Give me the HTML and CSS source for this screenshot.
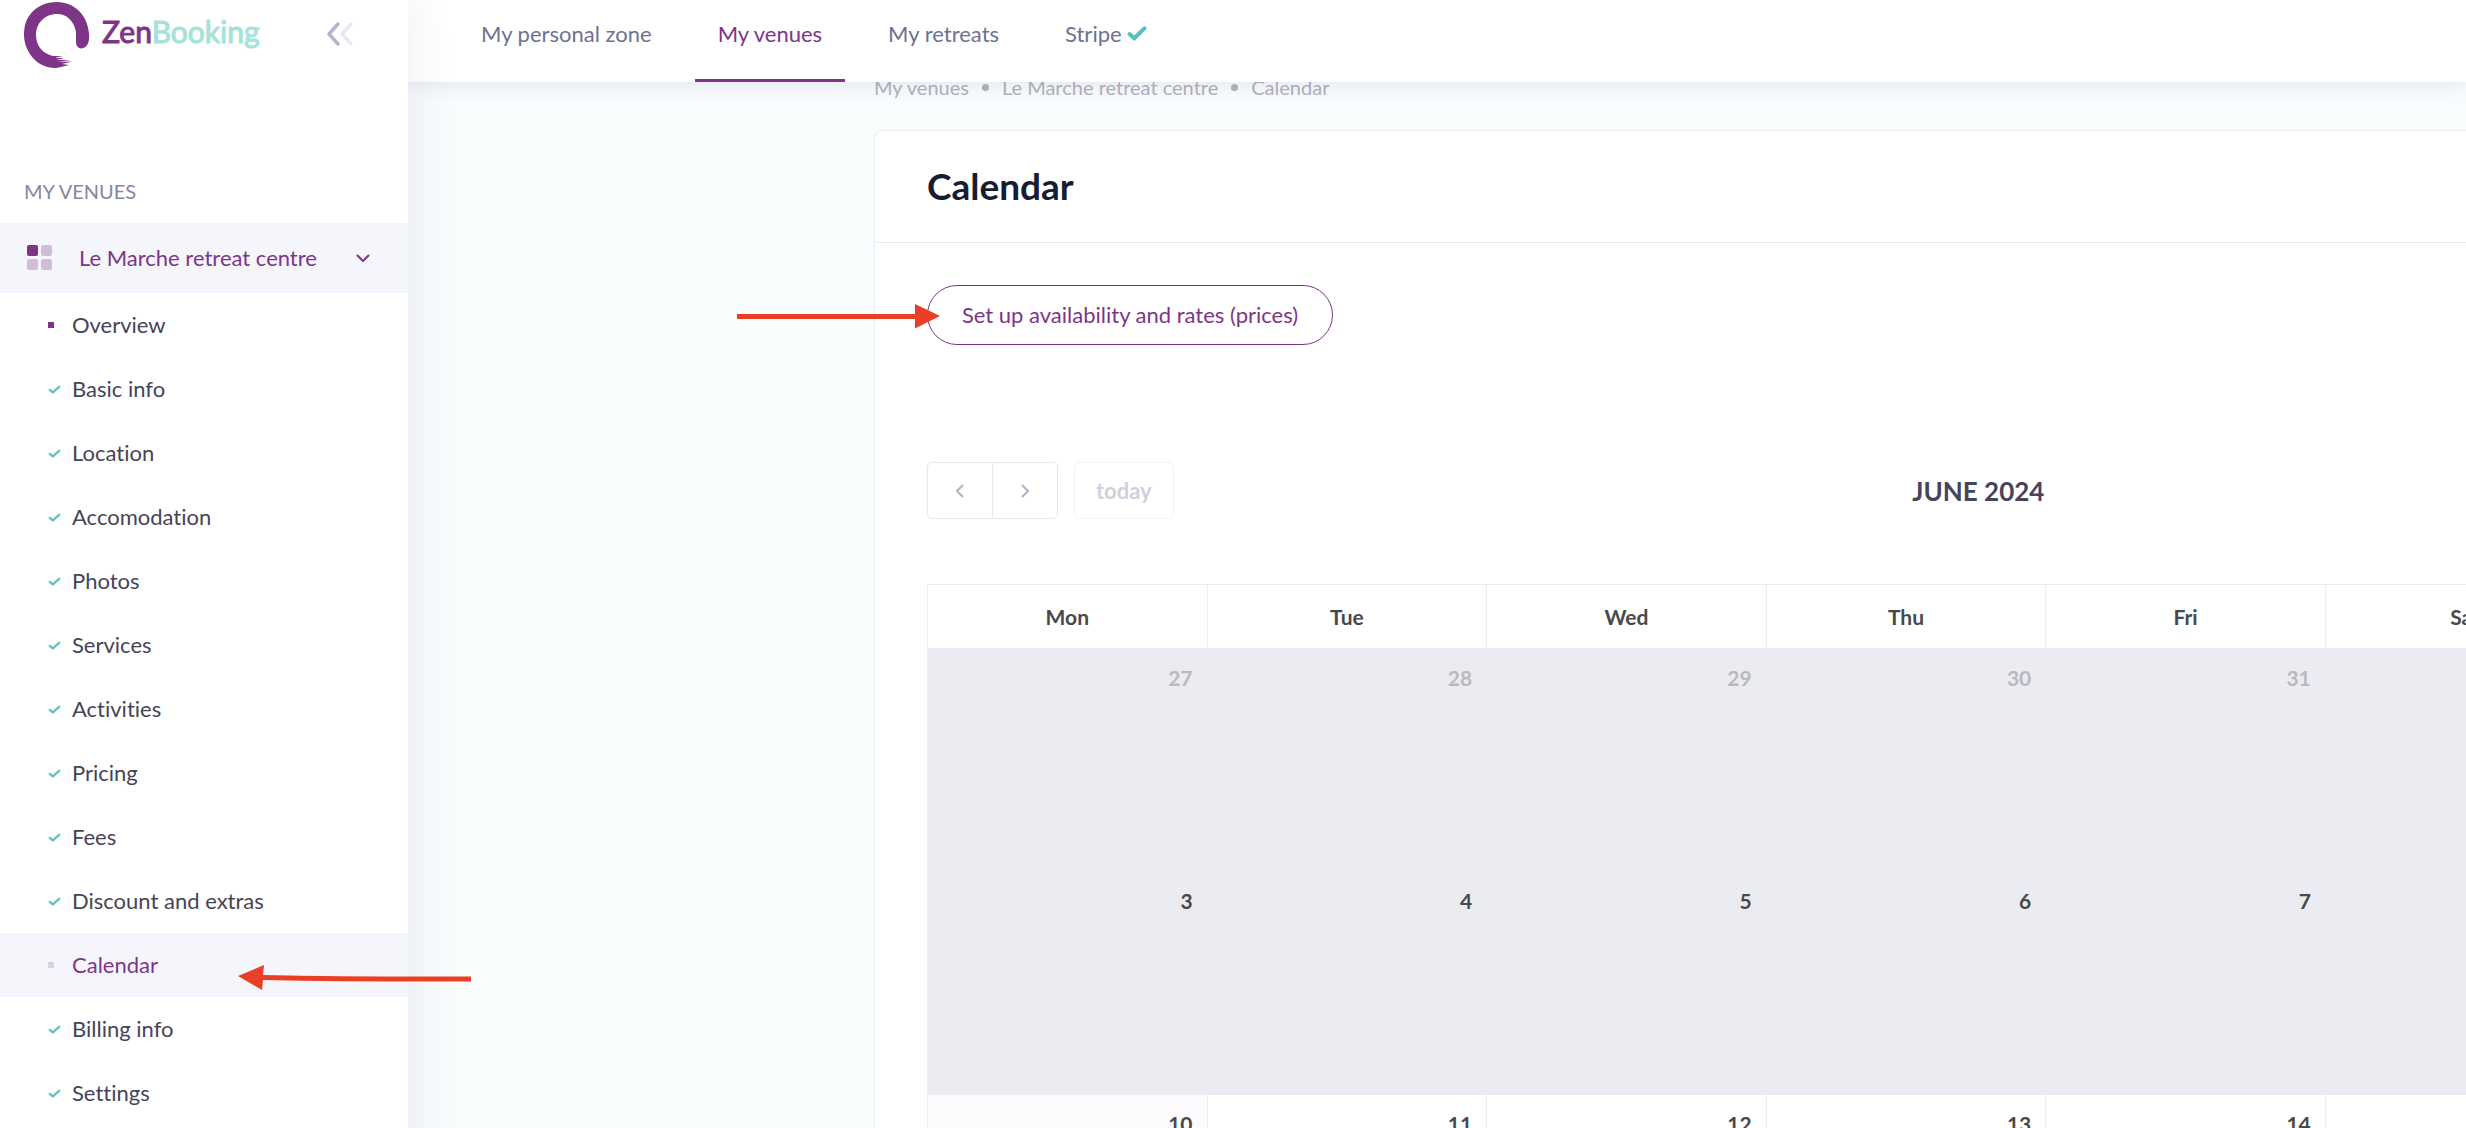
FILE: index.html
```html
<!DOCTYPE html>
<html lang="en">
<head>
<meta charset="utf-8">
<title>Calendar - ZenBooking</title>
<link rel="stylesheet" href="styles.css">
</head>
<body>
<svg class="sprite" width="0" height="0" aria-hidden="true">
  <symbol id="tick" viewBox="0 0 13 9"><path d="M1 4.300 4.800 7.300 12 1.200" fill="none" stroke="currentColor" stroke-width="2.300"/></symbol>
</svg>
<div class="app">
  <aside class="sidebar">
    <div class="brand">
      <a class="logo" href="#">
        <svg width="68" height="70" viewBox="0 0 68 70" aria-hidden="true">
          <path d="M0 35C0 27 2 20 5 16C12 6 22 2 33 2C51 2 64 16 65 34V39C64 51 52 51 52 42V32C50 21 43 14 33 14C21 14 12 23 12 35C12 47 20 54 29 56L39 56L31 57.500L40 58.500L32 60L46 60L34 62L48 61.500L38 64L45 65L37 67C28 70 16 66 9 58C4 52 0 44 0 35Z" fill="#7e3588"/>
        </svg>
        <span class="logo-name">Zen<span class="logo-accent">Booking</span></span>
      </a>
      <button class="collapse" type="button" aria-label="Collapse menu">
        <svg width="28" height="26" viewBox="0 0 28 26" fill="none" stroke-width="3.500" stroke-linecap="round" stroke-linejoin="round"><path d="M12 3 3 13 12 23" stroke="#b3b5cf"/><path d="M25 3 16 13 25 23" stroke="#e8e8f1"/></svg>
      </button>
    </div>
    <h2 class="section-title">MY VENUES</h2>
    <nav class="menu">
      <a class="venue" href="#">
        <svg width="26" height="26" viewBox="0 0 26 26" fill="#d2bdd9"><rect width="11" height="11" rx="2" fill="#7e3588"/><rect x="14" width="11" height="11" rx="2"/><rect y="14" width="11" height="11" rx="2"/><rect x="14" y="14" width="11" height="11" rx="2"/></svg>
        <span class="venue-name">Le Marche retreat centre</span>
        <svg width="14" height="9" viewBox="0 0 14 9" fill="none" stroke="#7e3588" stroke-width="2" stroke-linecap="round" stroke-linejoin="round"><path d="M1.500 1.500 7 7 12.500 1.500"/></svg>
      </a>
      <a class="item" href="#"><span class="mark"><i class="dot"></i></span>Overview</a>
      <a class="item" href="#"><span class="mark"><svg class="tick"><use href="#tick"/></svg></span>Basic info</a>
      <a class="item" href="#"><span class="mark"><svg class="tick"><use href="#tick"/></svg></span>Location</a>
      <a class="item" href="#"><span class="mark"><svg class="tick"><use href="#tick"/></svg></span>Accomodation</a>
      <a class="item" href="#"><span class="mark"><svg class="tick"><use href="#tick"/></svg></span>Photos</a>
      <a class="item" href="#"><span class="mark"><svg class="tick"><use href="#tick"/></svg></span>Services</a>
      <a class="item" href="#"><span class="mark"><svg class="tick"><use href="#tick"/></svg></span>Activities</a>
      <a class="item" href="#"><span class="mark"><svg class="tick"><use href="#tick"/></svg></span>Pricing</a>
      <a class="item" href="#"><span class="mark"><svg class="tick"><use href="#tick"/></svg></span>Fees</a>
      <a class="item" href="#"><span class="mark"><svg class="tick"><use href="#tick"/></svg></span>Discount and extras</a>
      <a class="item current" href="#"><span class="mark"><i class="dot"></i></span>Calendar</a>
      <a class="item" href="#"><span class="mark"><svg class="tick"><use href="#tick"/></svg></span>Billing info</a>
      <a class="item" href="#"><span class="mark"><svg class="tick"><use href="#tick"/></svg></span>Settings</a>
    </nav>
  </aside>

  <div class="main">
    <header class="topbar">
      <a class="tab" href="#">My personal zone</a>
      <a class="tab active" href="#">My venues</a>
      <a class="tab" href="#">My retreats</a>
      <a class="tab" href="#">Stripe<svg class="tab-check" width="20" height="15" viewBox="0 0 20 15" aria-hidden="true"><path d="M2.500 8 7.300 12.300 17.500 2.300" fill="none" stroke="#55c2bb" stroke-width="4" stroke-linecap="round"/></svg></a>
    </header>

    <main class="content">
      <nav class="crumbs" aria-label="Breadcrumb">
        <a href="#">My venues</a><i class="sep"></i><a href="#">Le Marche retreat centre</a><i class="sep"></i><a href="#">Calendar</a>
      </nav>
      <section class="card">
        <div class="card-head"><h1>Calendar</h1></div>
        <div class="card-body">
          <button class="setup" type="button">Set up availability and rates (prices)</button>
          <div class="toolbar">
            <div class="tools">
              <div class="pager">
                <button type="button" aria-label="Previous month"><svg width="8" height="14" viewBox="0 0 8 14"><path d="M7 1 1 7 7 13"/></svg></button>
                <button type="button" aria-label="Next month"><svg width="8" height="14" viewBox="0 0 8 14"><path d="M1 1 7 7 1 13"/></svg></button>
              </div>
              <button class="today" type="button" disabled>today</button>
            </div>
            <h2 class="month">JUNE 2024</h2>
          </div>
          <table class="calendar">
            <thead><tr><th>Mon</th><th>Tue</th><th>Wed</th><th>Thu</th><th>Fri</th><th>Sat</th><th>Sun</th></tr></thead>
            <tbody>
              <tr class="past other"><td>27</td><td>28</td><td>29</td><td>30</td><td>31</td><td class="june">1</td><td class="june">2</td></tr>
              <tr class="past"><td>3</td><td>4</td><td>5</td><td>6</td><td>7</td><td>8</td><td>9</td></tr>
              <tr><td class="now">10</td><td>11</td><td>12</td><td>13</td><td>14</td><td>15</td><td>16</td></tr>
            </tbody>
          </table>
        </div>
      </section>
    </main>
  </div>

  <svg class="arrow arrow-setup" width="204" height="26" viewBox="0 0 204 26" fill="#e94025" aria-hidden="true"><path d="M0 10H178V0L203 12 178 24.500V15H0Z"/></svg>
  <svg class="arrow arrow-menu" width="234" height="26" viewBox="0 0 234 26" fill="#e94025" aria-hidden="true"><path d="M0 11 26 0 25 10Q120 12 233 11.500V16.500Q120 17 25 15L24 25Z"/></svg>
</div>
</body>
</html>
```
FILE: styles.css
```css
* { box-sizing: border-box; }
body {
  margin: 0;
  font-family: Lato, "Open Sans", sans-serif;
  font-size: 22px;
  line-height: 28px;
  font-variant-ligatures: none;
  color: #464457;
  background: #f8fcfd;
}
a { color: inherit; text-decoration: none; }
button { font: inherit; font-variant-ligatures: none; background: #fff; cursor: pointer; }
h1, h2 { margin: 0; }
.sprite { position: absolute; }

.app {
  position: relative;
  display: grid;
  grid-template-columns: 408px minmax(0, 1fr);
  height: 100vh;
  overflow: hidden;
}

/* Sidebar */
.sidebar {
  position: relative;
  z-index: 3;
  background: #fff;
  box-shadow: 0 0 44px rgba(82, 63, 105, .1);
}
.brand {
  display: flex;
  align-items: center;
  justify-content: space-between;
  height: 69px;
  padding: 0 54px 0 24px;
}
.logo { display: flex; align-items: center; gap: 10px; }
.logo-name {
  font-size: 30px;
  line-height: 36px;
  color: #7e3588;
  padding-bottom: 8px;
  -webkit-text-stroke: 1px currentColor;
}
.logo-accent { color: #a5e2da; }
.collapse { display: flex; padding: 0 0 2px; border: 0; }
.section-title {
  padding: 108px 24px 18px;
  font-size: 20px;
  font-weight: 400;
  color: #84879d;
}
.venue {
  display: flex;
  align-items: center;
  height: 70px;
  padding: 0 38px 0 27px;
  color: #7e3588;
  background: #f5f6fc;
}
.venue-name { flex: 1; padding-left: 26px; }
.item {
  display: flex;
  align-items: center;
  height: 64px;
  padding-left: 48px;
}
.mark { display: flex; width: 24px; }
.dot { width: 6px; height: 6px; background: #7e3588; }
.tick { width: 13px; height: 9px; color: #5cc1bd; }
.current { color: #7e3588; background: #f5f6fc; }
.current .dot { background: #dccfe3; }

/* Top navigation */
.main { display: flex; flex-direction: column; min-width: 0; }
.topbar {
  position: relative;
  z-index: 2;
  display: flex;
  flex: none;
  gap: 20px;
  height: 82px;
  padding-left: 50px;
  background: #fff;
  box-shadow: 0 0 20px rgba(82, 63, 105, .15);
}
.tab {
  display: flex;
  align-items: flex-start;
  padding: 20px 23px 0;
  color: #6c7293;
  border-bottom: 3px solid transparent;
}
.tab.active { color: #7e3588; border-color: #7e3588; }
.tab-check { margin: 6px 0 0 5px; }

/* Content */
.content { padding: 0 0 0 466px; }
.crumbs {
  display: flex;
  align-items: center;
  gap: 13px;
  margin-top: -9px;
  font-size: 20px;
  color: #b2b1bf;
}
.sep { width: 7px; height: 7px; border-radius: 50%; background: #b2b1bf; }
.card {
  min-width: 2064px;
  margin-top: 29px;
  background: #fff;
  border: 1px solid #ebecf1;
  border-radius: 8px;
}
.card-head { padding: 33px 52px 34px; border-bottom: 1px solid #ebecf1; }
.card-head h1 { font-size: 37px; line-height: 44px; color: #181c32; }
.card-body { padding: 42px 52px; }
.setup {
  min-width: 406px;
  height: 60px;
  padding: 0 29px;
  color: #7e3588;
  border: 1px solid #7e3588;
  border-radius: 30px;
}
.toolbar {
  display: grid;
  grid-template-columns: auto 1fr 102px;
  align-items: center;
  margin: 117px 0 65px;
}
.tools { display: flex; gap: 16px; }
.pager { display: flex; }
.pager button {
  display: flex;
  align-items: center;
  justify-content: center;
  width: 66px;
  height: 57px;
  border: 1px solid #e6e6ef;
}
.pager button:first-child { border-radius: 5px 0 0 5px; }
.pager button:last-child { border-radius: 0 5px 5px 0; margin-left: -1px; }
.pager path { fill: none; stroke: #b2b1c5; stroke-width: 2; }
.today {
  height: 57px;
  padding: 0 21px;
  font-weight: 700;
  color: #d0d0dc;
  border: 1px solid #f2f2f7;
  border-radius: 5px;
}
.month { font-size: 26px; line-height: 32px; text-align: center; color: #464457; }

.calendar {
  width: 100%;
  table-layout: fixed;
  border-collapse: collapse;
  font-size: 21px;
  font-weight: 700;
  color: #48494a;
}
.calendar th, .calendar td { border: 1px solid #ebecf1; }
.calendar th { height: 64px; padding: 0; }
.calendar td {
  height: 223px;
  padding: 15px 14px;
  text-align: right;
  vertical-align: top;
}
.past td { background: #ebecf1; }
.other td { color: #b9babd; }
.other .june { color: #48494a; }
.calendar .now { background: #fcfafd; }

/* Pointers drawn over the page */
.arrow { position: absolute; z-index: 4; }
.arrow-setup { left: 737px; top: 304px; }
.arrow-menu { left: 238px; top: 965px; }
```
